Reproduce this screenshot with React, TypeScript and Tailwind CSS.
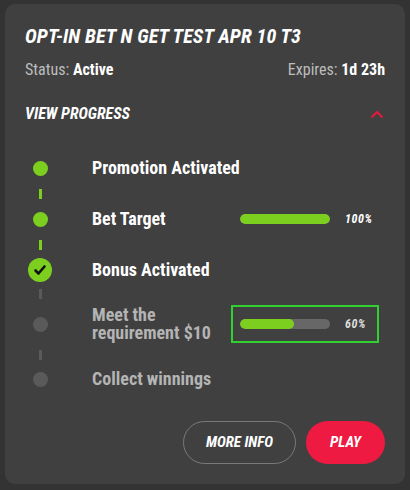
import React from "react";

type Step = {
  label: string;
  state: "done" | "check" | "pending";
  progress?: number;
  highlight?: boolean;
};

const steps: Step[] = [
  { label: "Promotion Activated", state: "done" },
  { label: "Bet Target", state: "done", progress: 100 },
  { label: "Bonus Activated", state: "check" },
  { label: "Meet the requirement $10", state: "pending", progress: 60, highlight: true },
  { label: "Collect winnings", state: "pending" },
];

function Dot({ state }: { state: Step["state"] }) {
  if (state === "check") {
    return (
      <div className="w-6 h-6 rounded-full bg-[#7ccf1f] flex items-center justify-center">
        <svg width="14" height="14" viewBox="0 0 14 14" fill="none">
          <path d="M2.5 7.5 L5.5 10.5 L11.5 3.5" stroke="#111" strokeWidth="2.6" strokeLinecap="round" strokeLinejoin="round" />
        </svg>
      </div>
    );
  }
  return (
    <div className={`w-[15px] h-[15px] rounded-full ${state === "done" ? "bg-[#7ccf1f]" : "bg-[#5a5a5a]"}`} />
  );
}

function Connector({ active, h }: { active: boolean; h: string }) {
  return (
    <div className={`flex ${h}`}>
      <div className="w-[30px] flex items-center justify-center">
        <div className={`w-[3px] h-[10px] ${active ? "bg-[#7ccf1f]" : "bg-[#5a5a5a]"}`} />
      </div>
    </div>
  );
}

function StepRow({ step }: { step: Step }) {
  const pending = step.state === "pending";
  const tall = step.label.length > 20;
  return (
    <div className={`flex items-center ${tall ? "h-[40px]" : "h-[26px]"}`}>
      <div className="w-[30px] flex items-center justify-center shrink-0">
        <Dot state={step.state} />
      </div>
      <div className="ml-[37px] flex-1 flex items-center min-w-0">
        <div
          className={`text-[18px] font-bold leading-[18px] ${
            step.progress !== undefined ? "w-[139px]" : ""
          } ${pending ? "text-[#b4b4b4]" : "text-white"}`}
        >
          {step.label}
        </div>
        {step.progress !== undefined && (
          <div
            className={`flex items-center h-[38px] w-[148px] pl-[7px] border-2 ${
              step.highlight ? "border-[#2fd12f]" : "border-transparent"
            }`}
          >
            <div className="w-[90px] h-[10px] rounded-full bg-[#676767] overflow-hidden">
              <div className="h-full rounded-full bg-[#7ccf1f]" style={{ width: `${step.progress}%` }} />
            </div>
            <span
              className={`ml-[15px] text-[12px] font-bold italic tracking-[0.6px] ${
                pending ? "text-[#dcdcdc]" : "text-white"
              }`}
            >
              {step.progress}%
            </span>
          </div>
        )}
      </div>
    </div>
  );
}

export default function App() {
  return (
    <div className="w-[410px] h-[490px] bg-[#333333] p-[5px] pt-[4px] font-['Roboto_Condensed','Liberation_Sans_Narrow',Roboto,sans-serif]">
      <div className="bg-[#404040] rounded-[10px] h-[480px] px-5 pt-[20px] pb-5 flex flex-col">
        <h1 className="text-white text-[20px] font-bold italic leading-6 tracking-[0.1px]">
          OPT-IN BET N GET TEST APR 10 T3
        </h1>
        <div className="mt-[12px] flex justify-between text-[16px] leading-5">
          <span className="text-[#bdbdbd]">
            Status: <span className="text-white font-bold">Active</span>
          </span>
          <span className="text-[#bdbdbd]">
            Expires: <span className="text-white font-bold">1d 23h</span>
          </span>
        </div>
        <div className="mt-[24px] flex items-center justify-between">
          <span className="text-white text-[16px] font-bold italic leading-5">VIEW PROGRESS</span>
          <svg width="14" height="9" viewBox="0 0 14 9" fill="none" className="mr-[1px]">
            <path d="M1.5 7.5 L7 2 L12.5 7.5" stroke="#e8173c" strokeWidth="2" />
          </svg>
        </div>
        <div className="mt-[31px] flex flex-col">
          <StepRow step={steps[0]} />
          <Connector active h="h-[25px]" />
          <StepRow step={steps[1]} />
          <Connector active h="h-[25px]" />
          <StepRow step={steps[2]} />
          <Connector active={false} h="h-[21px]" />
          <StepRow step={steps[3]} />
          <Connector active={false} h="h-[22px]" />
          <StepRow step={steps[4]} />
        </div>
        <div className="mt-auto flex justify-end gap-[10px]">
          <button className="h-[43px] w-[113px] rounded-full border border-[#7a7a7a] text-white text-[15px] font-bold italic">
            MORE INFO
          </button>
          <button className="h-[43px] w-[79px] rounded-full bg-[#ee1a41] text-white text-[15px] font-bold italic">
            PLAY
          </button>
        </div>
      </div>
    </div>
  );
}
